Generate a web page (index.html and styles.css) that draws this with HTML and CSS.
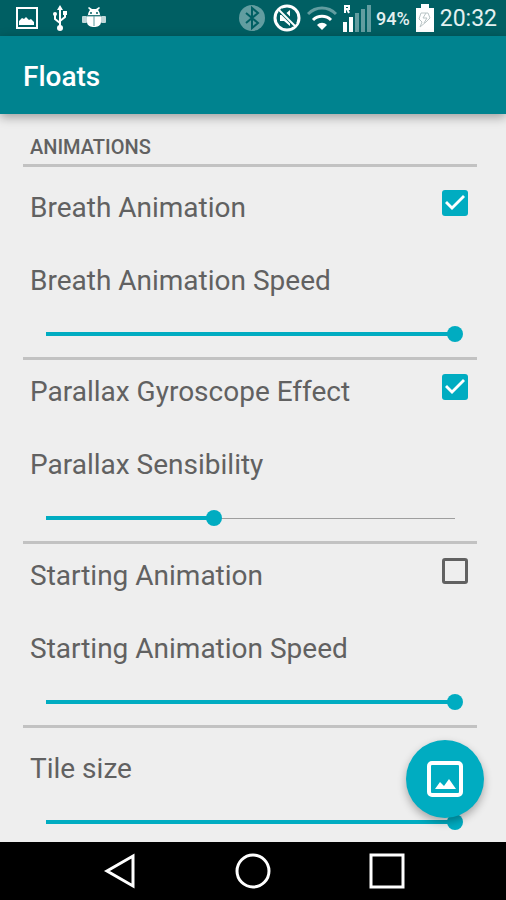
FILE: index.html
```html
<!DOCTYPE html>
<html lang="en">
<head>
<meta charset="utf-8">
<meta name="viewport" content="width=device-width, initial-scale=1">
<title>Floats</title>
<link rel="stylesheet" href="styles.css">
</head>
<body>
<div class="status-bar">
  <div class="notifications">
    <svg width="22" height="22" viewBox="0 0 22 22"><path fill="none" stroke="#fff" stroke-width="2" d="M1 1h20v20H1z"/><path fill="#fff" d="M3 18v-4l3-3 2 1 2-2 3 3 2-1 3 3v3z"/></svg>
    <svg width="16" height="26" viewBox="0 0 16 26"><path fill="none" stroke="#fff" stroke-width="2" d="M8 23V4M3 10v4l5 4M13 9v3l-5 4"/><path fill="#fff" d="M8 0l3 5H5zM11 6h4v4h-4z"/><circle cx="3" cy="9" r="2" fill="#fff"/><circle cx="8" cy="23" r="3" fill="#fff"/></svg>
    <svg width="24" height="22" viewBox="0 0 24 22"><path fill="#fff" d="M6 8c0-2 1-4 2-5L6 1l1-1 3 2h4l3-2 1 1-2 2c1 1 2 3 2 5z"/><path fill="#fff" d="M5 9h14v6c0 4-4 5-7 5s-7-1-7-5z"/><rect x="0" y="9" width="5" height="7" rx="1" fill="#fff" opacity=".75"/><rect x="19" y="9" width="5" height="7" rx="1" fill="#fff" opacity=".75"/><path stroke="#5b989b" d="M12 9v10M5 9h14"/><circle cx="9" cy="6" r="1" fill="#005f63"/><circle cx="15" cy="6" r="1" fill="#005f63"/></svg>
  </div>
  <div class="system">
    <svg width="28" height="28" viewBox="0 0 28 28"><circle cx="14" cy="14" r="13" fill="#629da0"/><path fill="none" stroke="#005f63" stroke-width="2" d="M8 9l12 10-6 5V4l6 5L8 19"/></svg>
    <svg class="muted" width="28" height="28" viewBox="0 0 28 28"><circle cx="14" cy="14" r="12" fill="none" stroke="#fff" stroke-width="3"/><path fill="#fff" d="M7 11h4l6-5v16l-6-5H7z"/><path stroke="#005f63" stroke-width="5" d="M7 6l15 15"/><path stroke="#fff" stroke-width="2" d="M5 5l18 18"/></svg>
    <svg class="wifi" width="30" height="26" viewBox="0 0 30 26"><path fill="none" stroke="#629da0" stroke-width="3" d="M1 9c8-8 20-8 28 0"/><path fill="none" stroke="#fff" stroke-width="3" d="M6 15c5-5 13-5 18 0"/><path fill="#fff" d="M10 20c3-3 7-3 10 0l-5 5z"/></svg>
    <svg class="signal" width="30" height="28" viewBox="0 0 30 28"><path fill="none" stroke="#fff" stroke-width="2" d="M3 9V2h4v3H3M5 5l2 4"/><path fill="#fff" d="M1 18h4v10H1zM7 13h4v15H7z"/><path fill="#629da0" d="M13 9h4v19h-4zM19 5h4v23h-4zM25 1h4v27h-4z"/></svg>
    <span class="charge">94%</span>
    <svg class="battery" width="18" height="28" viewBox="0 0 18 28"><path fill="#fff" d="M5 0h8v4h5v24H0V4h5z"/><path fill="none" stroke="#b9c4c5" d="M5 9h7l2 5-4 4-6 5 2-5-3-3zM10 9l-3 5h4l-3 5"/></svg>
    <time class="clock">20:32</time>
  </div>
</div>

<header class="app-bar"><h1>Floats</h1></header>

<div class="screen">
  <main class="settings">
    <h2>Animations</h2>

    <section class="group roomy">
      <div class="row"><label for="breath">Breath Animation</label><input type="checkbox" id="breath" checked></div>
      <label class="slider-label" for="breath-speed">Breath Animation Speed</label>
      <input type="range" id="breath-speed" value="100" style="--fill:1">
    </section>

    <section class="group">
      <div class="row"><label for="parallax">Parallax Gyroscope Effect</label><input type="checkbox" id="parallax" checked></div>
      <label class="slider-label" for="sensibility">Parallax Sensibility</label>
      <input type="range" id="sensibility" value="41" style="--fill:.41">
    </section>

    <section class="group">
      <div class="row"><label for="starting">Starting Animation</label><input type="checkbox" id="starting"></div>
      <label class="slider-label" for="starting-speed">Starting Animation Speed</label>
      <input type="range" id="starting-speed" value="100" style="--fill:1">
    </section>

    <section class="group roomy">
      <div class="row"><label for="tile-size">Tile size</label></div>
      <input type="range" id="tile-size" value="100" style="--fill:1">
    </section>
  </main>
  <button class="fab" type="button" aria-label="Choose picture">
    <svg width="36" height="36" viewBox="0 0 36 36"><rect x="2" y="2" width="32" height="32" rx="3" fill="none" stroke="#fff" stroke-width="4"/><path fill="#fff" d="M8 28l5-7 4 4 5-7 7 10z"/></svg>
  </button>
</div>

<nav class="nav-bar">
  <button type="button" aria-label="Back"><svg width="36" height="36" viewBox="0 0 36 36"><path fill="none" stroke="#fff" stroke-width="3" d="M32 3v30L6 18z"/></svg></button>
  <button type="button" aria-label="Home"><svg width="36" height="36" viewBox="0 0 36 36"><circle cx="18" cy="18" r="16" fill="none" stroke="#fff" stroke-width="3"/></svg></button>
  <button type="button" aria-label="Recent apps"><svg width="36" height="36" viewBox="0 0 36 36"><path fill="none" stroke="#fff" stroke-width="3" d="M2 2h32v32H2z"/></svg></button>
</nav>
</body>
</html>
```
FILE: styles.css
```css
* { box-sizing: border-box; }

body {
  margin: 0;
  height: 100vh;
  display: flex;
  flex-direction: column;
  background: #eee;
  color: #616161;
  font-family: Roboto, "Liberation Sans", sans-serif;
}

svg { display: block; }

button {
  border: 0;
  padding: 0;
  cursor: pointer;
}

.status-bar {
  flex: none;
  height: 36px;
  padding: 0 9px 0 16px;
  display: flex;
  align-items: center;
  justify-content: space-between;
  background: #005f63;
  color: #e4f0f0;
}

.notifications,
.system {
  display: flex;
  align-items: center;
}

.notifications { gap: 14px; }
.muted { margin-left: 7px; }
.wifi { margin-left: 6px; }
.signal { margin-left: 5px; }

.charge {
  margin-left: 4px;
  font-size: 18px;
  font-weight: 500;
}

.battery { margin-left: 6px; }

.clock {
  margin-left: 6px;
  font-size: 23px;
  line-height: 24px;
  padding-top: 2px;
}

.app-bar {
  flex: none;
  height: 78px;
  padding: 2px 23px 0;
  display: flex;
  align-items: center;
  background: #00838f;
  color: #fff;
  box-shadow: 0 3px 10px rgba(0, 0, 0, .35);
  z-index: 1;
}

h1 {
  margin: 0;
  font-size: 28px;
  font-weight: 500;
}

.screen {
  flex: 1;
  min-height: 0;
  position: relative;
}

.settings {
  height: 100%;
  padding: 21px 29px 0 23px;
  overflow-y: auto;
  scrollbar-width: none;
}

h2 {
  margin: 0;
  padding: 0 7px 5px;
  font-size: 20px;
  line-height: 24px;
  font-weight: 500;
  text-transform: uppercase;
}

.group {
  padding: 14px 9px 7px 7px;
  border-top: 3px solid #c2c2c2;
  display: flex;
  flex-direction: column;
  font-size: 28px;
  line-height: 36px;
}

.roomy { padding-top: 23px; }

.row {
  display: flex;
  align-items: flex-start;
  justify-content: space-between;
}

.slider-label { margin-top: 37px; }

input {
  appearance: none;
  margin: 0;
  cursor: pointer;
}

input[type="checkbox"] {
  width: 26px;
  height: 26px;
  border: 3px solid #616161;
  border-radius: 3px;
}

input[type="checkbox"]:checked {
  border: 0;
  background: #00acc1;
  display: grid;
  place-items: center;
}

input[type="checkbox"]:checked::before {
  content: "";
  width: 20px;
  height: 16px;
  background: #fff;
  clip-path: polygon(0 8px, 2px 6px, 7px 11px, 18px 0, 20px 2px, 7px 15px);
}

input[type="range"] {
  height: 32px;
  margin: 19px 5px 0 8px;
  background:
    linear-gradient(#00acc1, #00acc1) 8px center / calc((100% - 16px) * var(--fill)) 4px no-repeat content-box,
    linear-gradient(#9e9e9e, #9e9e9e) center / calc(100% - 16px) 1px no-repeat;
}

input[type="range"]::-webkit-slider-thumb {
  appearance: none;
  width: 16px;
  height: 16px;
  border-radius: 50%;
  background: #00acc1;
}

.fab {
  position: absolute;
  right: 22px;
  bottom: 24px;
  width: 78px;
  height: 78px;
  border-radius: 50%;
  display: grid;
  place-items: center;
  background: #00acc1;
  box-shadow: 0 4px 8px rgba(0, 0, 0, .3);
}

.nav-bar {
  flex: none;
  height: 58px;
  display: flex;
  align-items: center;
  justify-content: center;
  background: #000;
}

.nav-bar button {
  width: 134px;
  height: 58px;
  display: grid;
  place-items: center;
  background: transparent;
}
```
